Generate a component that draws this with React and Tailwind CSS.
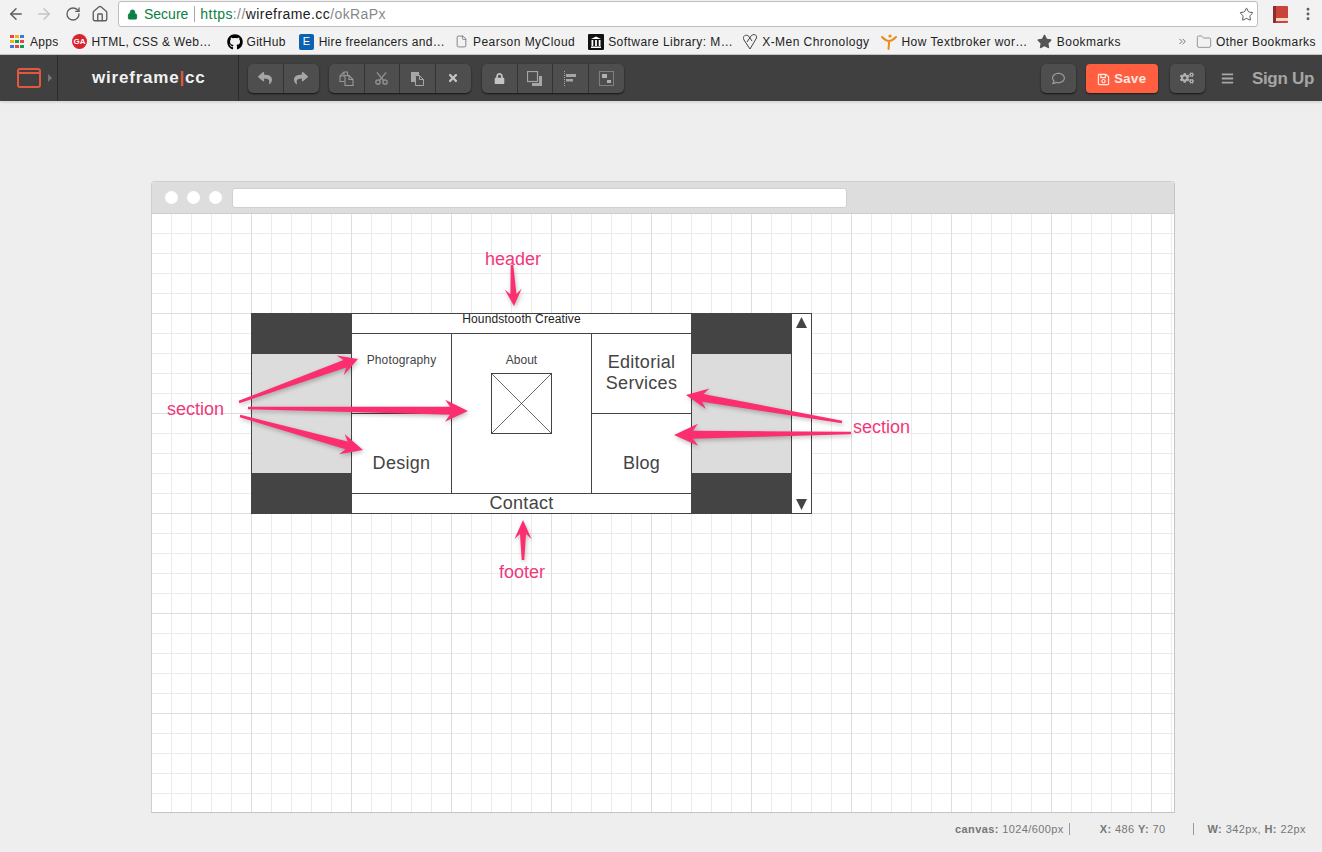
import React from "react";
import { ArrowLeft, ArrowRight, RotateCw, House, Star, Lock, EllipsisVertical, File, Folder, ChevronsRight } from "lucide-react";
import { FaGithub, FaStar, FaReply, FaShare, FaTimes, FaLock, FaCogs, FaBars, FaRegComment, FaRegSave } from "react-icons/fa";
import { TbCut } from "react-icons/tb";

const Arrow = ({ t, h, len, w, tw = 1.3, sw = 7 }) => {
  const dx = h[0] - t[0], dy = h[1] - t[1];
  const L = Math.hypot(dx, dy);
  const u = [dx / L, dy / L], n = [-u[1], u[0]];
  const p = (a, o) => `${(t[0] + u[0] * a + n[0] * o).toFixed(1)},${(t[1] + u[1] * a + n[1] * o).toFixed(1)}`;
  const b = L - len;
  const pts = [p(0, -tw), p(b + 3, -sw / 2), p(b - 2, -w / 2), p(L, 0), p(b - 2, w / 2), p(b + 3, sw / 2), p(0, tw)].join(" ");
  return <polygon points={pts} fill="#fb2f6f" />;
};

const Btn = ({ children, last }) => (
  <div className={`w-[35.5px] h-full flex items-center justify-center text-[#a6a6a6] text-[13px] ${last ? "" : "border-r border-[#333333]"}`}>{children}</div>
);
const Group = ({ children, className = "" }) => (
  <div className={`flex h-[29px] rounded-[5px] bg-[#4e4e4e] shadow-[0_1px_2px_rgba(0,0,0,0.7)] overflow-hidden ${className}`}>{children}</div>
);

const Bm = ({ icon, label, className = "" }) => (
  <div className={`flex items-center shrink-0 ${className}`}>
    <div className="w-[16px] h-[16px] flex items-center justify-center shrink-0">{icon}</div>
    <span className="ml-[4px] whitespace-nowrap">{label}</span>
  </div>
);

const dots = ["#e8453c", "#f4b400", "#3b78e7", "#f4b400", "#0f9d58", "#e8453c", "#3b78e7", "#e8453c", "#0f9d58"];

export default function App() {
  return (
    <div className="w-[1322px] h-[852px] overflow-hidden flex flex-col bg-[#eeeeee] font-['Liberation_Sans',Arial,sans-serif]">
      {/* browser bar */}
      <div className="h-[27px] pt-[1px] bg-[#f2f2f2] flex items-center shrink-0 relative">
        <ArrowLeft className="w-[18px] h-[18px] ml-[7px] text-[#5f5f5f]" strokeWidth={2} />
        <ArrowRight className="w-[18px] h-[18px] ml-[10px] text-[#c4c4c4]" strokeWidth={2} />
        <RotateCw className="w-[16px] h-[16px] ml-[12px] text-[#5f5f5f]" strokeWidth={2} />
        <House className="w-[18px] h-[18px] ml-[10px] text-[#5f5f5f]" strokeWidth={1.8} />
        <div className="ml-[9px] w-[1140px] h-[26px] bg-white border border-[#bdbdbd] rounded-[3px] flex items-center text-[14px]">
          <Lock className="w-[11px] h-[11px] ml-[8px] text-[#0b8043]" fill="#0b8043" strokeWidth={2} />
          <span className="ml-[6px] text-[#0b8043]">Secure</span>
          <span className="ml-[6px] w-px h-[16px] bg-[#aaa]" />
          <span className="ml-[5px] tracking-[0.42px]"><span className="text-[#0b8043]">https</span><span className="text-[#888]">://</span><span className="text-[#222]">wireframe.cc</span><span className="text-[#888]">/okRaPx</span></span>
          <Star className="w-[15px] h-[15px] ml-auto mr-[3px] text-[#555]" strokeWidth={1.6} />
        </div>
        <svg className="ml-[15px]" width="15" height="17" viewBox="0 0 15 17"><rect width="15" height="17" rx="1" fill="#c9453b" /><rect x="0" y="12" width="15" height="3" fill="#f3d9c8" /><rect x="0" y="0" width="3" height="17" fill="#8e2e28" /></svg>
        <EllipsisVertical className="w-[16px] h-[16px] ml-[12px] text-[#5f5f5f]" strokeWidth={2.4} />
      </div>
      {/* bookmarks */}
      <div className="h-[28px] pt-[2px] bg-[#f2f2f2] border-b border-[#c9c9c9] flex items-center text-[12px] tracking-[0.3px] text-[#222] shrink-0">
        <div className="ml-[10px] w-[14px] grid grid-cols-3 gap-[1.5px]">
          {dots.map((c, i) => <span key={i} className="w-[3.5px] h-[3.5px]" style={{ background: c }} />)}
        </div>
        <span className="ml-[6px]">Apps</span>
        <Bm className="ml-[13px]" label="HTML, CSS & Web…" icon={<span className="w-[15px] h-[15px] rounded-full bg-[#d9232e] text-white text-[8px] tracking-normal font-bold flex items-center justify-center">GA</span>} />
        <Bm className="ml-[15px]" label="GitHub" icon={<FaGithub className="w-[16px] h-[16px] text-black" />} />
        <Bm className="ml-[13px]" label="Hire freelancers and…" icon={<span className="w-[15px] h-[16px] rounded-[2px] bg-[#0b62b0] text-white text-[11px] flex items-center justify-center">E</span>} />
        <div className="flex items-center tracking-[0.45px]">
          <Bm className="ml-[8px]" label="Pearson MyCloud" icon={<File className="w-[13px] h-[13px] text-[#666]" strokeWidth={1.4} />} />
          <Bm className="ml-[13px]" label="Software Library: M…" icon={<svg width="16" height="16" viewBox="0 0 16 16"><rect width="16" height="16" rx="1" fill="#111" /><path d="M3 5h10L8 2.5zM3.5 6h1.8v6H3.5zM7.1 6h1.8v6H7.1zM10.7 6h1.8v6h-1.8zM3 12.5h10V14H3z" fill="#fff" /></svg>} />
          <Bm className="ml-[9px]" label="X-Men Chronology" icon={<svg width="16" height="17" viewBox="0 0 16 17" fill="none" stroke="#444" strokeWidth="1"><path d="M8 16 L2 7 C0 3 4 0.5 7 3.5 L10 8 M8 16 L14.5 5 C15.5 1.5 11 0.5 9 3 L5 9" /></svg>} />
          <Bm className="ml-[12px]" label="How Textbroker wor…" icon={<svg width="16" height="17" viewBox="0 0 16 17" fill="none" stroke="#ee8a1d" strokeWidth="2" strokeLinecap="round"><path d="M1 4 C3 6 5 8 8 8 C10 8 13 6 15 4 M8 8 C8 11 8 13 7.5 16" /><circle cx="9" cy="3" r="1.6" fill="#ee8a1d" stroke="none" /></svg>} />
          <Bm className="ml-[9px]" label="Bookmarks" icon={<FaStar className="w-[15px] h-[15px] text-[#555]" />} />
          <ChevronsRight className="ml-[56px] w-[11px] h-[11px] text-[#666]" />
          <Folder className="ml-[8px] w-[16px] h-[16px] text-[#888]" strokeWidth={1.3} />
          <span className="ml-[4px] whitespace-nowrap">Other Bookmarks</span>
        </div>
      </div>
      {/* app toolbar */}
      <div className="h-[46px] bg-[#404040] flex items-center shrink-0 shadow-[0_1px_3px_rgba(0,0,0,0.15)] relative">
        <div className="w-[58px] h-[46px] border-r border-[#2c2c2c] flex items-center shrink-0">
          <div className="ml-[17px] w-[24px] h-[20px] rounded-[3px] border-[2px] border-[#e2583e]"><div className="h-[4px] border-b-2 border-[#e2583e]" /></div>
          <span className="ml-[7px] w-0 h-0 border-y-[4px] border-y-transparent border-l-[4px] border-l-[#777]" />
        </div>
        <div className="w-[181px] h-[46px] border-r border-[#2c2c2c] flex items-center shrink-0 pl-[34px] text-[17px] font-bold tracking-[0.8px] text-[#f2f2f2]">
          wireframe<span className="text-[#e2583e]">|</span>cc
        </div>
        <Group className="ml-[9px]">
          <Btn><FaReply className="text-[14px]" /></Btn><Btn last><FaShare className="text-[14px]" /></Btn>
        </Group>
        <Group className="ml-[10px]">
          <Btn><svg width="15" height="15" viewBox="0 0 15 15" fill="none" stroke="#9a9a9a" strokeWidth="1.1"><path d="M5.5 10.5H1V5L5 1h3.5v3" /><path d="M5 1v4H1" /><path d="M6 4.5h4l4 4v6H6z" fill="#4e4e4e" /><path d="M10 4.5v4h4" /></svg></Btn>
          <Btn><TbCut className="text-[17px] text-[#8f8f8f]" /></Btn>
          <Btn><svg width="14" height="15" viewBox="0 0 14 15"><path d="M1 1h8v3H5v7H1z" fill="#a6a6a6" /><path d="M5.5 4.5h4l4 4v6h-8z" fill="#4e4e4e" stroke="#a6a6a6" /><path d="M9.5 4.5v4h4" fill="none" stroke="#a6a6a6" /></svg></Btn>
          <Btn last><FaTimes className="text-[#c4c4c4] text-[12px]" /></Btn>
        </Group>
        <Group className="ml-[11px]">
          <Btn><FaLock className="text-[11px] text-[#c4c4c4]" /></Btn>
          <Btn><svg width="15" height="15" viewBox="0 0 15 15" fill="none" stroke="#a6a6a6"><rect x="0.5" y="0.5" width="10" height="10" strokeWidth="1.2" /><path d="M13.5 5v8.5H5" strokeWidth="3" /></svg></Btn>
          <Btn><svg width="12" height="15" viewBox="0 0 12 15" fill="#a6a6a6"><path d="M0.5 0v15" stroke="#a6a6a6" strokeDasharray="1 1" fill="none" /><rect x="2" y="3" width="10" height="3" /><rect x="2" y="8" width="7" height="2.5" /></svg></Btn>
          <Btn last><svg width="15" height="15" viewBox="0 0 15 15" fill="none"><rect x="0.5" y="0.5" width="14" height="14" stroke="#b0b0b0" strokeDasharray="1 1" /><rect x="3" y="3" width="5" height="4" fill="#b0b0b0" /><rect x="8" y="9" width="4" height="3" fill="#b0b0b0" /></svg></Btn>
        </Group>
        <Group className="ml-auto">
          <div className="w-[35px] flex items-center justify-center text-[#999] text-[13px]"><FaRegComment /></div>
        </Group>
        <div className="ml-[10px] w-[72px] h-[29px] pt-[2px] rounded-[4px] bg-[#ff5f40] shadow-[0_1px_2px_rgba(0,0,0,0.6)] flex items-center justify-center text-[#ffe9e2] text-[13px] tracking-[0.5px] font-bold">
          <FaRegSave className="mr-[4px] text-[13px]" />Save
        </div>
        <Group className="ml-[12px]">
          <div className="w-[35px] flex items-center justify-center text-[#b0b0b0] text-[14px]"><FaCogs /></div>
        </Group>
        <FaBars className="ml-[16px] mt-[1px] w-[13px] h-[13px] text-[#a6a6a6]" />
        <span className="ml-[18px] mr-[8px] mt-[2px] text-[17px] tracking-[-0.3px] font-bold text-[#a6a6a6] whitespace-nowrap">Sign Up</span>
      </div>
      {/* workspace */}
      <div className="flex-1 pt-[80px] pl-[151px] flex flex-col">
        <div className="w-[1024px] h-[632px] border border-[#cfcfcf] border-r-[#c4c4c4] border-b-[#c4c4c4] rounded-t-[4px] flex flex-col bg-white shrink-0">
          <div className="h-[32px] bg-[#dddddd] border-b border-[#cdcdcd] flex items-center shrink-0 rounded-t-[4px]">
            <span className="ml-[13px] w-[13px] h-[13px] rounded-full bg-white" />
            <span className="ml-[9px] w-[13px] h-[13px] rounded-full bg-white" />
            <span className="ml-[9px] w-[13px] h-[13px] rounded-full bg-white" />
            <span className="ml-[10px] w-[615px] h-[20px] rounded-[3px] bg-white border border-[#d0d0d0]" />
          </div>
          <div className="relative flex-1 bg-white bg-[linear-gradient(to_right,#dedede_1px,transparent_1px),linear-gradient(to_bottom,#dedede_1px,transparent_1px),linear-gradient(to_right,#ebebeb_1px,transparent_1px),linear-gradient(to_bottom,#ebebeb_1px,transparent_1px)] bg-[size:100px_100px,100px_100px,20px_20px,20px_20px] bg-[position:-1px_-1px]">
            {/* wireframe on the canvas */}
            <div className="absolute left-[99px] top-[99px] w-[561px] h-[201px] flex font-['Liberation_Sans',Arial,sans-serif] text-[#444444]">
              <div className="w-[101px] flex flex-col shrink-0">
                <div className="h-[41px] bg-[#444444]" />
                <div className="h-[119px] bg-[#dcdcdc] border-x border-[#444444]" />
                <div className="h-[41px] bg-[#444444]" />
              </div>
              <div className="w-[339px] flex flex-col bg-white shrink-0">
                <div className="h-[21px] border-y border-[#444444] flex justify-center text-[12px] leading-[11px] tracking-[0.12px] text-[#222] shrink-0">Houndstooth Creative</div>
                <div className="flex flex-1">
                  <div className="w-[100px] border-r border-[#444444] flex flex-col shrink-0">
                    <div className="h-[80px] border-b border-[#444444] text-center text-[12px] tracking-[0.15px] leading-[14px] pt-[19px]">Photography</div>
                    <div className="flex-1 text-center text-[18px] leading-[21px] tracking-[0.3px] pt-[39px]">Design</div>
                  </div>
                  <div className="w-[140px] border-r border-[#444444] flex flex-col items-center shrink-0">
                    <div className="text-[12px] leading-[14px] mt-[19px]">About</div>
                    <svg className="mt-[6px]" width="61" height="61" viewBox="0 0 61 61" fill="none" stroke="#444444"><rect x="0.5" y="0.5" width="60" height="60" /><path d="M0.5 0.5L60.5 60.5M60.5 0.5L0.5 60.5" strokeWidth="0.8" /></svg>
                  </div>
                  <div className="flex-1 flex flex-col">
                    <div className="h-[80px] border-b border-[#444444] text-center text-[18px] leading-[21px] tracking-[0.3px] pt-[18px]">Editorial<br />Services</div>
                    <div className="flex-1 text-center text-[18px] leading-[21px] tracking-[0.3px] pt-[39px]">Blog</div>
                  </div>
                </div>
                <div className="h-[21px] border-y border-[#444444] text-center text-[18px] leading-[19px] tracking-[0.3px] shrink-0">Contact</div>
              </div>
              <div className="w-[101px] flex flex-col shrink-0">
                <div className="h-[41px] bg-[#444444]" />
                <div className="h-[119px] bg-[#dcdcdc] border-x border-[#444444]" />
                <div className="h-[41px] bg-[#444444]" />
              </div>
              <div className="w-[20px] bg-white border-y border-r border-[#444444] flex flex-col items-center justify-between py-[3px] shrink-0">
                <svg width="11" height="11" viewBox="0 0 11 11"><polygon points="5.5,0 11,11 0,11" fill="#444444" /></svg>
                <svg width="11" height="11" viewBox="0 0 11 11"><polygon points="0,0 11,0 5.5,11" fill="#444444" /></svg>
              </div>
            </div>
            {/* annotations */}
            <svg className="absolute left-0 top-0 drop-shadow-[1px_2px_2px_rgba(0,0,0,0.25)]" width="1022" height="598" viewBox="152 214 1022 598">
              <Arrow t={[512, 265]} h={[514, 306]} len={15} w={17} sw={6} />
              <Arrow t={[239, 402]} h={[358, 359]} len={17} w={21} sw={8} />
              <Arrow t={[248, 408]} h={[468, 411]} len={21} w={22} sw={8} />
              <Arrow t={[240, 416]} h={[363, 450]} len={20} w={21} sw={8} />
              <Arrow t={[842, 422]} h={[686, 395]} len={20} w={21} sw={8} />
              <Arrow t={[851, 433]} h={[674, 435]} len={22} w={22} sw={8} />
              <Arrow t={[523, 560]} h={[523, 520]} len={17} w={17} sw={6} />
            </svg>
            <span className="absolute left-[333px] top-[35px] text-[18px] leading-[21px] text-[#f0387a]">header</span>
            <span className="absolute left-[15px] top-[185px] text-[18px] leading-[21px] text-[#f0387a]">section</span>
            <span className="absolute left-[701px] top-[203px] text-[18px] leading-[21px] text-[#f0387a]">section</span>
            <span className="absolute left-[347px] top-[348px] text-[18px] leading-[21px] text-[#f0387a]">footer</span>
          </div>
        </div>
        {/* status */}
        <div className="flex items-center h-[14px] mt-[9px] text-[11px] tracking-[0.4px] text-[#777] shrink-0">
          <span className="ml-[804px] whitespace-nowrap"><b>canvas:</b> 1024/600px</span>
          <span className="ml-[5px] w-px h-[12px] bg-[#999]" />
          <span className="ml-[30px] whitespace-nowrap"><b>X:</b> 486 <b>Y:</b> 70</span>
          <span className="ml-[27px] w-px h-[12px] bg-[#999]" />
          <span className="ml-[14px] whitespace-nowrap"><b>W:</b> 342px, <b>H:</b> 22px</span>
        </div>
      </div>
    </div>
  );
}
